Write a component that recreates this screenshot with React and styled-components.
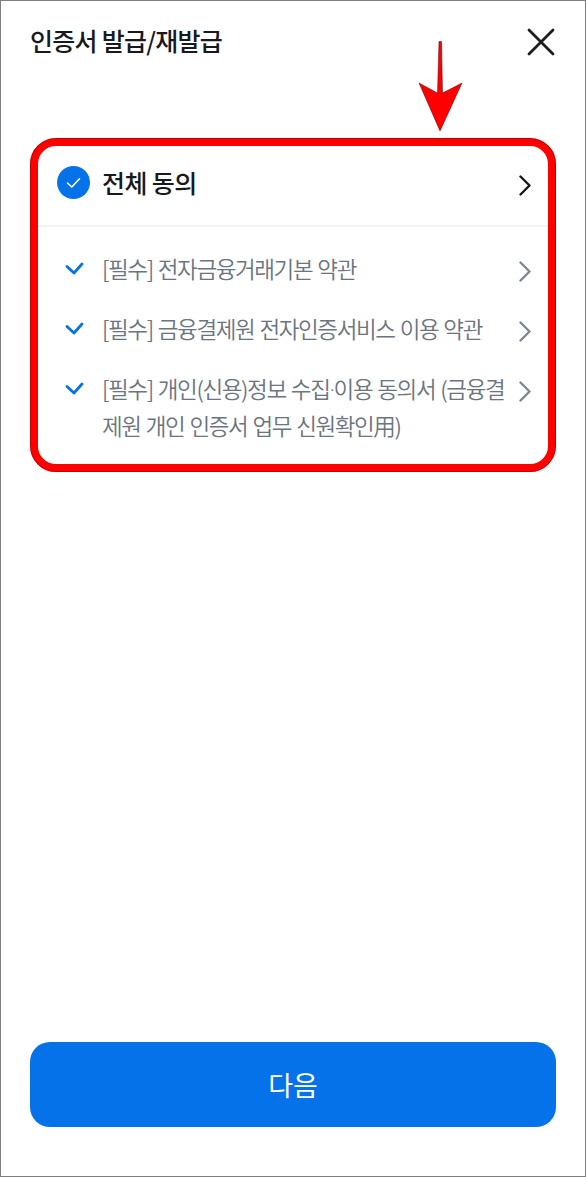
import React from "react";
import styled, { createGlobalStyle } from "styled-components";

const Global = createGlobalStyle`
  html, body { margin: 0; padding: 0; background: #fff; }
  * { box-sizing: border-box; }
`;

const Page = styled.div`
  position: relative;
  width: 586px;
  height: 1177px;
  border: 1px solid #7f7f7f;
  background: #fff;
  display: flex;
  flex-direction: column;
  padding: 0 29px 49px;
  font-family: "Noto Sans CJK KR", "Noto Sans", sans-serif;
  overflow: hidden;
`;

const Header = styled.header`
  height: 137px;
  display: flex;
  justify-content: space-between;
  align-items: flex-start;
  padding-top: 21px;
`;

const Title = styled.h1`
  margin: 0;
  font-size: 25px;
  line-height: 36px;
  font-weight: 500;
  letter-spacing: -0.75px;
  color: #17191c;
`;

const CloseButton = styled.div`
  width: 28px;
  height: 28px;
  margin: 6px 1px 0 0;
  display: flex;
`;

const Card = styled.section`
  width: 526px;
  height: 334px;
  border: 8px solid #f00;
  border-radius: 26px;
  outline: 1px solid #50000055;
  outline-offset: -1px;
  display: flex;
  flex-direction: column;
  flex: none;
`;

const AllRow = styled.div`
  height: 81px;
  flex: none;
  display: flex;
  align-items: center;
  padding: 0 17px 6px 19px;
  border-bottom: 2px solid #f2f3f6;
`;

const Badge = styled.div`
  width: 33px;
  height: 33px;
  border-radius: 50%;
  background: #0672ea;
  display: flex;
  align-items: center;
  justify-content: center;
  flex: none;
`;

const AllLabel = styled.span`
  flex: 1;
  margin: 0 0 1px 12px;
  font-size: 25px;
  line-height: 36px;
  font-weight: 500;
  letter-spacing: -0.6px;
  color: #17191c;
`;

const List = styled.ul`
  list-style: none;
  margin: 0;
  padding: 25px 17px 0 27px;
  display: flex;
  flex-direction: column;
  gap: 22px;
`;

const Item = styled.li`
  display: flex;
  align-items: flex-start;
`;

const Tick = styled.div`
  width: 19px;
  height: 33px;
  flex: none;
  display: flex;
  align-items: center;
`;

const ItemText = styled.span`
  flex: 1;
  margin: -1px 0 0 18px;
  font-size: 22.5px;
  line-height: 35px;
  font-weight: 350;
  letter-spacing: -1.4px;
  word-spacing: 1.5px;
  color: #6b7480;
  word-break: break-all;
`;

const MiddleDot = styled.span`
  font-family: "Roboto", sans-serif;
`;

const Chevron = styled.div`
  width: 12px;
  height: 38px;
  margin-left: ${(p) => p.$left}px;
  margin-top: ${(p) => p.$top}px;
  flex: none;
  display: flex;
  align-items: center;
`;

const Spacer = styled.div`
  flex: 1;
`;

const NextButton = styled.button`
  width: 526px;
  height: 85px;
  flex: none;
  border: 0;
  border-radius: 20px;
  background: #0672ea;
  color: #fff;
  font-family: inherit;
  font-size: 27px;
  font-weight: 400;
`;

const Arrow = styled.svg`
  position: absolute;
  left: 416px;
  top: 40px;
`;

const items = [
  <>[필수] 전자금융거래기본 약관</>,
  <>[필수] 금융결제원 전자인증서비스 이용 약관</>,
  <>[필수] 개인(신용)정보 수집<MiddleDot>·</MiddleDot>이용 동의서 (금융결제원 개인 인증서 업무 신원확인用)</>,
];

const ChevronIcon = ({ color }) => (
  <svg width="12" height="21" viewBox="0 0 12 21" fill="none">
    <path d="M1.5 1.5 L10.5 10.5 L1.5 19.5" stroke={color} strokeWidth="2.4" strokeLinecap="round" strokeLinejoin="round" />
  </svg>
);

export default function App() {
  return (
    <Page>
      <Global />
      <Header>
        <Title>인증서 발급/재발급</Title>
        <CloseButton>
          <svg width="28" height="28" viewBox="0 0 28 28" fill="none">
            <path d="M2 2 L26 26 M26 2 L2 26" stroke="#1b1d20" strokeWidth="2.8" strokeLinecap="round" />
          </svg>
        </CloseButton>
      </Header>
      <Card>
        <AllRow>
          <Badge>
            <svg width="15" height="12" viewBox="0 0 15 12" fill="none">
              <path d="M1.5 6 L5.8 10 L13.5 1.8" stroke="#fff" strokeWidth="1.6" strokeLinecap="round" strokeLinejoin="round" />
            </svg>
          </Badge>
          <AllLabel>전체 동의</AllLabel>
          <Chevron $left={0} $top={6}>
            <ChevronIcon color="#17191c" />
          </Chevron>
        </AllRow>
        <List>
          {items.map((t, i) => (
            <Item key={i}>
              <Tick>
                <svg width="19" height="14" viewBox="0 0 19 14" fill="none">
                  <path d="M2 4.5 L9 11 L17 2" stroke="#0672ea" strokeWidth="2.8" strokeLinecap="round" strokeLinejoin="round" />
                </svg>
              </Tick>
              <ItemText>{t}</ItemText>
              <Chevron $left={12} $top={0}>
                <ChevronIcon color="#7d8794" />
              </Chevron>
            </Item>
          ))}
        </List>
      </Card>
      <Spacer />
      <NextButton>다음</NextButton>
      <Arrow width="46" height="92" viewBox="0 0 46 92">
        <path d="M22 0.5 L24.5 0.5 L25.5 52 L45 42 L23 90 L2 42 L20.5 52 Z" fill="#f00" stroke="#500" strokeWidth="0.5" />
      </Arrow>
    </Page>
  );
}
